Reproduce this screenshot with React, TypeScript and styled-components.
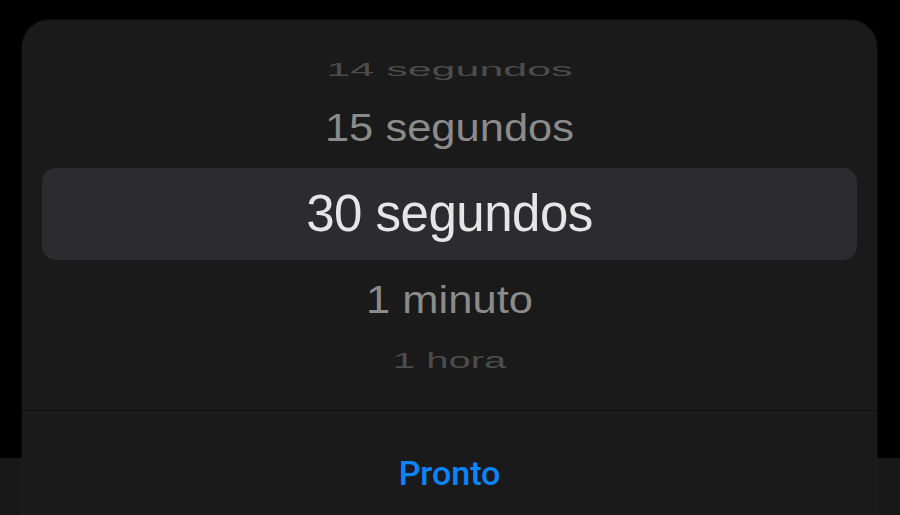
import React from "react";
import styled, { createGlobalStyle } from "styled-components";

const GlobalStyle = createGlobalStyle`
  html, body {
    margin: 0;
    padding: 0;
    background: #000000;
  }
  body {
    font-family: "Liberation Sans", Arial, sans-serif;
    -webkit-font-smoothing: antialiased;
  }
`;

const Screen = styled.div`
  width: 900px;
  height: 515px;
  overflow: hidden;
  padding-top: 20px;
  box-sizing: border-box;
  background: linear-gradient(#000000 0 458px, #181818 458px);
`;

const Sheet = styled.div`
  width: 855px;
  height: 530px;
  margin-left: 22px;
  background: #1a1a1a;
  border-radius: 27px;
  box-shadow: 0 0 0 1px rgba(255, 255, 255, 0.03);
  display: flex;
  flex-direction: column;
`;

const Wheel = styled.div`
  display: flex;
  flex-direction: column;
  padding: 30px 20px;
  border-bottom: 1px solid rgba(0, 0, 0, 0.45);
`;

type Depth = "far" | "near" | "selected";

const Row = styled.div<{ $depth: Depth; $height: number; $size: number }>`
  height: ${(p) => p.$height}px;
  line-height: ${(p) => p.$height}px;
  text-align: center;
  white-space: nowrap;
  font-size: ${(p) => p.$size}px;
  letter-spacing: ${(p) => (p.$depth === "selected" ? "-0.5px" : "0")};
  color: ${(p) =>
    p.$depth === "selected" ? "#e6e6e6" : p.$depth === "near" ? "#8b8b8b" : "#4c4c4c"};
  background: ${(p) => (p.$depth === "selected" ? "#2c2c2e" : "transparent")};
  border-radius: ${(p) => (p.$depth === "selected" ? "14px" : "0")};
`;

// rows off the centre are flattened, as on a turning wheel
const Label = styled.span<{ $squash?: number }>`
  display: inline-block;
  transform: scaleY(${(p) => p.$squash ?? 1});
`;

const Footer = styled.div`
  padding-top: 42px;
  display: flex;
  justify-content: center;
`;

const DoneButton = styled.button`
  border: 0;
  background: none;
  padding: 0;
  font-family: Roboto, "Liberation Sans", Arial, sans-serif;
  font-size: 34px;
  line-height: 40px;
  font-weight: 500;
  color: #0a84ff;
  cursor: pointer;
`;

const App = () => {
  return (
    <>
      <GlobalStyle />
      <Screen>
        <Sheet>
          <Wheel>
            <Row $depth="far" $height={39} $size={43}>
              <Label $squash={0.44}>14 segundos</Label>
            </Row>
            <Row $depth="near" $height={79} $size={43.5}>
              <Label $squash={0.88}>15 segundos</Label>
            </Row>
            <Row $depth="selected" $height={92} $size={51}>
              <Label>30 segundos</Label>
            </Row>
            <Row $depth="near" $height={80} $size={43.5}>
              <Label $squash={0.88}>1 minuto</Label>
            </Row>
            <Row $depth="far" $height={40} $size={40}>
              <Label $squash={0.56}>1 hora</Label>
            </Row>
          </Wheel>
          <Footer>
            <DoneButton>Pronto</DoneButton>
          </Footer>
        </Sheet>
      </Screen>
    </>
  );
};

export default App;
